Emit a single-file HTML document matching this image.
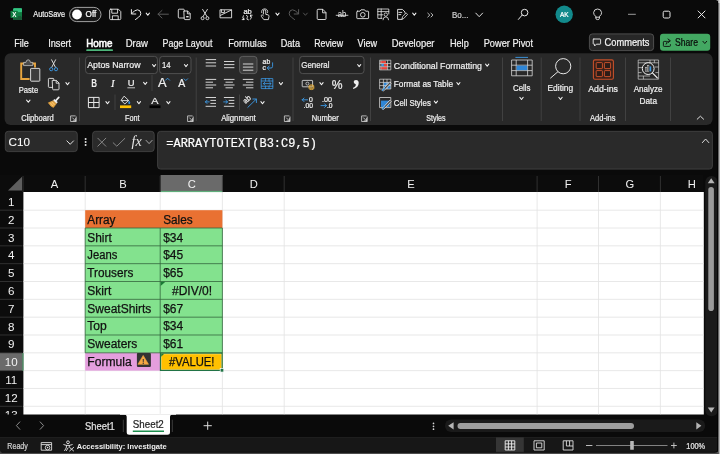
<!DOCTYPE html>
<html lang="en">
<head>
<meta charset="utf-8">
<title>Excel - ARRAYTOTEXT</title>
<style>
html,body{margin:0;padding:0;background:#0a0a0a;overflow:hidden}
body{width:720px;height:454px}
svg{display:block;will-change:transform;font-family:"Liberation Sans",sans-serif}
</style>
</head>
<body>
<svg width="720" height="454" viewBox="0 0 720 454">
<rect x="0" y="0" width="720" height="454" fill="#0a0a0a" />
<rect x="13.2" y="8.3" width="8.8" height="11.7" fill="#21a366" rx="1" />
<rect x="13.2" y="8.3" width="8.8" height="3.9" fill="#33c481" rx="1" />
<rect x="13.2" y="16.1" width="8.8" height="3.9" fill="#185c37" rx="1" />
<rect x="17.6" y="12.2" width="4.4" height="3.9" fill="#107c41" />
<rect x="10.5" y="10.7" width="7.3" height="7.3" fill="#107c41" rx="0.8" />
<text x="14.4" y="16.7" font-size="6.6" fill="#ffffff" textLength="4.2" lengthAdjust="spacingAndGlyphs" font-weight="bold" text-anchor="middle" >X</text>
<text x="33.3" y="17.3" font-size="8.3" fill="#f0f0f0" textLength="31.7" lengthAdjust="spacingAndGlyphs" stroke="#f0f0f0" stroke-width="0.22" >AutoSave</text>
<rect x="69.6" y="7.4" width="31.4" height="14.2" fill="#161616" rx="7.1" stroke="#b0b0b0" stroke-width="0.9" />
<circle cx="77" cy="14.5" r="4.9" fill="#ffffff"/>
<text x="85.6" y="17.3" font-size="8.3" fill="#ffffff" textLength="10.7" lengthAdjust="spacingAndGlyphs" stroke="#ffffff" stroke-width="0.22" >Off</text>
<path d="M110.7 9.2 H118.4 L120.8 11.6 V18.6 Q120.8 19.6 119.8 19.6 H110.7 Q109.7 19.6 109.7 18.6 V10.2 Q109.7 9.2 110.7 9.2 Z M111.8 9.4 V13.2 H117.6 V9.4 M112.4 19.4 V15.8 H118.2 V19.4" stroke="#e8e8e8" stroke-width="0.9" fill="none" stroke-linecap="round" stroke-linejoin="round"/>
<path d="M131.4 9.6 V14 H135.8 M131.6 13.8 Q134.4 9.8 137.6 9.8 Q140.8 10.2 140.8 13.4 Q140.8 15.6 138.6 17.2 L135.4 19.6" stroke="#e8e8e8" stroke-width="1.0" fill="none" stroke-linecap="round" stroke-linejoin="round"/>
<path d="M146.20000000000002 13.149999999999999 L147.8 15.25 L149.4 13.149999999999999" stroke="#f4f4f4" stroke-width="1.05" fill="none" stroke-linecap="round" stroke-linejoin="round"/>
<path d="M168.4 14.2 H158 M162 10.4 L158 14.2 L162 18" stroke="#5a5a5a" stroke-width="1.0" fill="none" stroke-linecap="round" stroke-linejoin="round"/>
<path d="M184.2 18 H179.2 Q178.3 18 178.3 17.1 V10.1 Q178.3 9.2 179.2 9.2 H183.4 Q184.3 9.2 184.3 10.1 V11" stroke="#e8e8e8" stroke-width="0.9" fill="none" stroke-linecap="round" stroke-linejoin="round"/>
<path d="M184.2 11 H187.6 L190.2 13.6 V18.8 Q190.2 19.6 189.4 19.6 H185 Q184.2 19.6 184.2 18.8 Z M187.4 11.2 V13.8 H190" stroke="#e8e8e8" stroke-width="0.9" fill="none" stroke-linecap="round" stroke-linejoin="round"/>
<rect x="186.2" y="16" width="2.4" height="1.4" fill="#e8e8e8" />
<path d="M202.6 9.4 L207 16.6 M207.4 9.4 L203 16.6" stroke="#e8e8e8" stroke-width="0.9" fill="none" stroke-linecap="round" stroke-linejoin="round"/>
<circle cx="202.6" cy="18.2" r="1.5" fill="none" stroke="#e8e8e8" stroke-width="0.9"/>
<circle cx="207.4" cy="18.2" r="1.5" fill="none" stroke="#e8e8e8" stroke-width="0.9"/>
<path d="M220.4 9.8 H231.6 V17.8 H220.4 Z M220.4 15.4 L231.4 10 M221.4 9.8 V12.6 H224.4 V10.6" stroke="#e8e8e8" stroke-width="0.9" fill="none" stroke-linecap="round" stroke-linejoin="round"/>
<text x="243.4" y="14.4" font-size="7.4" fill="#f2f2f2" textLength="8.4" lengthAdjust="spacingAndGlyphs" stroke="#f2f2f2" stroke-width="0.22" >ab</text>
<path d="M243.4 15.6 Q241.6 17.6 243.8 19.6 M243.8 19.6 V18 M243.8 19.6 H242.2 M250.6 15.2 Q252.8 17.2 250.4 19.4 M250.6 15.2 V16.8 M250.6 15.2 H252.2 M246.4 15.4 Q248.8 16 247.2 17.8 Q245.8 19.4 248.4 19.9" stroke="#f2f2f2" stroke-width="0.85" fill="none" stroke-linecap="round" stroke-linejoin="round"/>
<path d="M263.4 14 V11 Q263.4 9.8 264.6 9.8 Q265.8 9.8 265.8 11 V14.4 L268 14.8 Q269.2 15.2 269 16.4 L268.4 19.6 H263.8 L261.4 16.4 Q260.8 15.4 261.8 15 Q262.6 14.8 263.4 15.8" stroke="#e8e8e8" stroke-width="0.9" fill="none" stroke-linecap="round" stroke-linejoin="round"/>
<path d="M261.6 12.6 Q260.8 9.4 264.6 8.8 Q268.4 9.2 267.6 12.6" stroke="#e8e8e8" stroke-width="0.8" fill="none" stroke-linecap="round" stroke-linejoin="round"/>
<path d="M275.9 13.149999999999999 L277.5 15.25 L279.1 13.149999999999999" stroke="#f4f4f4" stroke-width="1.05" fill="none" stroke-linecap="round" stroke-linejoin="round"/>
<path d="M298.6 9.6 V14 H294.2 M298.4 13.8 Q295.6 9.8 292.4 9.8 Q289.2 10.2 289.2 13.4 Q289.2 15.6 291.4 17.2 L294.6 19.6" stroke="#5a5a5a" stroke-width="1.0" fill="none" stroke-linecap="round" stroke-linejoin="round"/>
<path d="M303.5 13.1 L305.4 15.299999999999999 L307.29999999999995 13.1" stroke="#5a5a5a" stroke-width="0.9" fill="none" stroke-linecap="round" stroke-linejoin="round"/>
<path d="M317.2 10 Q317.2 9.3 317.9 9.3 H322.8 L326 12.6 V18.8 Q326 19.5 325.3 19.5 H317.9 Q317.2 19.5 317.2 18.8 Z M322.6 9.5 V12.8 H325.8" stroke="#e8e8e8" stroke-width="0.9" fill="none" stroke-linecap="round" stroke-linejoin="round"/>
<text x="337.8" y="17.4" font-size="8.4" fill="#f2f2f2" textLength="8.6" lengthAdjust="spacingAndGlyphs" stroke="none">ab</text>
<line x1="335.8" y1="15.3" x2="348.3" y2="15.3" stroke="#f2f2f2" stroke-width="0.8" />
<path d="M357.4 11.2 H360 L361 9.8 H364.6 L365.6 11.2 H368 Q368.6 11.2 368.6 11.8 V18 Q368.6 18.6 368 18.6 H357.4 Q356.8 18.6 356.8 18 V11.8 Q356.8 11.2 357.4 11.2 Z" stroke="#e8e8e8" stroke-width="0.9" fill="none" stroke-linecap="round" stroke-linejoin="round"/>
<circle cx="362.8" cy="14.8" r="2.3" fill="none" stroke="#e8e8e8" stroke-width="0.9"/>
<path d="M377.8 9 H388.8 V14 M377.8 9 V18.4 H382 M377.8 11.6 H388.8 M381.2 9 V18.4 M377.8 14.8 H382.6" stroke="#e8e8e8" stroke-width="0.8" fill="none" stroke-linecap="round" stroke-linejoin="round"/>
<circle cx="385.8" cy="14.6" r="1.7" fill="none" stroke="#e8e8e8" stroke-width="0.8"/>
<path d="M383 19.8 Q383 16.9 385.8 16.9 Q388.6 16.9 388.6 19.8" stroke="#e8e8e8" stroke-width="0.8" fill="none" stroke-linecap="round" stroke-linejoin="round"/>
<path d="M402 19.4 H397.6 V9.4 H402.4 L405 12 V13 M398.8 12.4 H401.8 M398.8 14.6 H400.8" stroke="#e8e8e8" stroke-width="0.9" fill="none" stroke-linecap="round" stroke-linejoin="round"/>
<path d="M402 18.8 L402.6 16.6 L406.2 13 L407.6 14.4 L404 18.2 Z" stroke="#e8e8e8" stroke-width="0.8" fill="none" stroke-linecap="round" stroke-linejoin="round"/>
<path d="M412.7 13.149999999999999 L414.3 15.25 L415.90000000000003 13.149999999999999" stroke="#f4f4f4" stroke-width="1.05" fill="none" stroke-linecap="round" stroke-linejoin="round"/>
<path d="M427.8 13.2 L429.8 15.1 L427.8 17 M431 13.2 L433 15.1 L431 17" stroke="#cfcfcf" stroke-width="0.9" fill="none" stroke-linecap="round" stroke-linejoin="round"/>
<text x="452" y="17.5" font-size="8.6" fill="#cfcfcf" textLength="16.4" lengthAdjust="spacingAndGlyphs" stroke="#cfcfcf" stroke-width="0.22" >Bo...</text>
<path d="M475.8 13.1 L479.2 16.7 L482.59999999999997 13.1" stroke="#e0e0e0" stroke-width="1.0" fill="none" stroke-linecap="round" stroke-linejoin="round"/>
<circle cx="524.6" cy="12.6" r="3.3" fill="none" stroke="#e8e8e8" stroke-width="1"/>
<path d="M522.2 15 L518.4 19.4" stroke="#e8e8e8" stroke-width="1.0" fill="none" stroke-linecap="round" stroke-linejoin="round"/>
<circle cx="564.2" cy="14.3" r="8.7" fill="#128a8c"/>
<text x="564.3" y="16.9" font-size="6.9" fill="#ffffff" textLength="8.6" lengthAdjust="spacingAndGlyphs" text-anchor="middle" stroke="#ffffff" stroke-width="0.22" >AK</text>
<path d="M595.8 16.6 Q593.4 14.4 593.6 12.6 Q594 9 597.6 9 Q601.2 9 601.6 12.6 Q601.8 14.4 599.4 16.6 V18.4 Q599.4 19.6 597.6 19.6 Q595.8 19.6 595.8 18.4 Z M595.8 17.2 H599.4" stroke="#e8e8e8" stroke-width="0.9" fill="none" stroke-linecap="round" stroke-linejoin="round"/>
<line x1="628" y1="14.3" x2="635.8" y2="14.3" stroke="#9a9a9a" stroke-width="1.0" />
<rect x="663.2" y="11.2" width="6.8" height="6.8" fill="none" rx="1.4" stroke="#e8e8e8" stroke-width="1.0" />
<path d="M698.1 11 L705 17.9 M705 11 L698.1 17.9" stroke="#e8e8e8" stroke-width="1.0" fill="none" stroke-linecap="round"/>
<text x="14.2" y="47" font-size="10.4" fill="#f0f0f0" textLength="14.5" lengthAdjust="spacingAndGlyphs" stroke="#f0f0f0" stroke-width="0.22" >File</text>
<text x="48.2" y="47" font-size="10.4" fill="#f0f0f0" textLength="23.0" lengthAdjust="spacingAndGlyphs" stroke="#f0f0f0" stroke-width="0.22" >Insert</text>
<text x="125.7" y="47" font-size="10.4" fill="#f0f0f0" textLength="22.3" lengthAdjust="spacingAndGlyphs" stroke="#f0f0f0" stroke-width="0.22" >Draw</text>
<text x="162.5" y="47" font-size="10.4" fill="#f0f0f0" textLength="50.0" lengthAdjust="spacingAndGlyphs" stroke="#f0f0f0" stroke-width="0.22" >Page Layout</text>
<text x="228.2" y="47" font-size="10.4" fill="#f0f0f0" textLength="38.5" lengthAdjust="spacingAndGlyphs" stroke="#f0f0f0" stroke-width="0.22" >Formulas</text>
<text x="280.7" y="47" font-size="10.4" fill="#f0f0f0" textLength="19.3" lengthAdjust="spacingAndGlyphs" stroke="#f0f0f0" stroke-width="0.22" >Data</text>
<text x="314.2" y="47" font-size="10.4" fill="#f0f0f0" textLength="28.8" lengthAdjust="spacingAndGlyphs" stroke="#f0f0f0" stroke-width="0.22" >Review</text>
<text x="357.5" y="47" font-size="10.4" fill="#f0f0f0" textLength="19.5" lengthAdjust="spacingAndGlyphs" stroke="#f0f0f0" stroke-width="0.22" >View</text>
<text x="391.7" y="47" font-size="10.4" fill="#f0f0f0" textLength="42.8" lengthAdjust="spacingAndGlyphs" stroke="#f0f0f0" stroke-width="0.22" >Developer</text>
<text x="450" y="47" font-size="10.4" fill="#f0f0f0" textLength="18.7" lengthAdjust="spacingAndGlyphs" stroke="#f0f0f0" stroke-width="0.22" >Help</text>
<text x="483.7" y="47" font-size="10.4" fill="#f0f0f0" textLength="49.3" lengthAdjust="spacingAndGlyphs" stroke="#f0f0f0" stroke-width="0.22" >Power Pivot</text>
<text x="86.2" y="47" font-size="10.4" fill="#ffffff" textLength="26.3" lengthAdjust="spacingAndGlyphs" stroke="#ffffff" stroke-width="0.55">Home</text>
<rect x="86.2" y="49.2" width="26.8" height="1.9" fill="#4db57a" rx="0.9" />
<rect x="589.4" y="33.9" width="64.2" height="16.7" fill="#272727" rx="3" stroke="#5c5c5c" stroke-width="0.8" />
<path d="M593.8 39 H600 Q600.6 39 600.6 39.6 V43.6 Q600.6 44.2 600 44.2 H596.4 L594.6 46 V44.2 H593.8 Q593.2 44.2 593.2 43.6 V39.6 Q593.2 39 593.8 39 Z" stroke="#f0f0f0" stroke-width="0.9" fill="none" stroke-linecap="round" stroke-linejoin="round"/>
<text x="604.5" y="46.2" font-size="10.2" fill="#f5f5f5" textLength="45" lengthAdjust="spacingAndGlyphs" stroke="#f5f5f5" stroke-width="0.22" >Comments</text>
<rect x="660" y="33.7" width="50.2" height="17.1" fill="#43a862" rx="3" />
<path d="M666.4 41.4 H664.2 Q663.4 41.4 663.4 42.2 V45.6 Q663.4 46.4 664.2 46.4 H669.6 Q670.4 46.4 670.4 45.6 V44.6 M666 44.2 Q666.4 41 669.4 40.8 M668 39 L670.4 40.8 L668 42.8" stroke="#0c0c0c" stroke-width="0.9" fill="none" stroke-linecap="round" stroke-linejoin="round"/>
<text x="675" y="46.2" font-size="10.2" fill="#0a0a0a" textLength="23" lengthAdjust="spacingAndGlyphs" stroke="#0a0a0a" stroke-width="0.22" >Share</text>
<path d="M702.9 41.3 L704.8 43.5 L706.6999999999999 41.3" stroke="#0a0a0a" stroke-width="0.9" fill="none" stroke-linecap="round" stroke-linejoin="round"/>
<rect x="4.6" y="53.2" width="708" height="71.8" fill="#292929" rx="6" />
<path d="M25 63.5 H21.2 V79 H29.6" stroke="#e9a63f" stroke-width="1.9" fill="none" stroke-linejoin="miter"/>
<path d="M31.6 63.5 H35 V67.6" stroke="#e9a63f" stroke-width="1.9" fill="none" stroke-linejoin="miter"/>
<path d="M23.6 65.2 V62.4 H26 Q26.2 59.8 28.2 59.8 Q30.2 59.8 30.4 62.4 H32.8 V65.2 Z" stroke="#c4c4c4" stroke-width="0.8" fill="#4a4a4a" stroke-linecap="round" stroke-linejoin="round"/>
<rect x="30.6" y="68.4" width="9.2" height="12.8" fill="#3c3c3c" rx="0.6" stroke="#e8e8e8" stroke-width="0.9" />
<text x="18.7" y="93" font-size="9.700000000000001" fill="#f0f0f0" textLength="19.5" lengthAdjust="spacingAndGlyphs" stroke="#f0f0f0" stroke-width="0.22" >Paste</text>
<path d="M26.6 100.10000000000001 L28.3 102.3 L30.0 100.10000000000001" stroke="#f4f4f4" stroke-width="1.05" fill="none" stroke-linecap="round" stroke-linejoin="round"/>
<path d="M51.6 59.8 L55.4 67.2 M55.6 59.8 L51.8 67.2" stroke="#e8e8e8" stroke-width="0.9" fill="none" stroke-linecap="round" stroke-linejoin="round"/>
<circle cx="51.2" cy="69.2" r="1.6" fill="none" stroke="#3c9be8" stroke-width="0.9"/>
<circle cx="56" cy="69.2" r="1.6" fill="none" stroke="#3c9be8" stroke-width="0.9"/>
<path d="M52.6 87.4 H49.2 Q48.4 87.4 48.4 86.6 V79.2 Q48.4 78.4 49.2 78.4 H53 Q53.8 78.4 53.8 79.2 V80.4" stroke="#e8e8e8" stroke-width="0.9" fill="none" stroke-linecap="round" stroke-linejoin="round"/>
<path d="M52.6 80.4 H56.4 L59 83 V89 Q59 89.8 58.2 89.8 H53.4 Q52.6 89.8 52.6 89 Z M56.2 80.6 V83.2 H58.8" stroke="#e8e8e8" stroke-width="0.9" fill="none" stroke-linecap="round" stroke-linejoin="round"/>
<path d="M65.9 82.65 L67.5 84.75 L69.1 82.65" stroke="#f4f4f4" stroke-width="1.05" fill="none" stroke-linecap="round" stroke-linejoin="round"/>
<path d="M55.8 100.6 L58.8 97.4" stroke="#f0f0f0" stroke-width="1.7" fill="none" stroke-linecap="round"/>
<path d="M54.6 99.6 L57.4 102.2 L56 103.4 L53.4 100.8 Z" stroke="#f0f0f0" stroke-width="0.7" fill="#f0f0f0" stroke-linecap="round" stroke-linejoin="round"/>
<path d="M53 101 L48.4 102.8 Q50.6 106.6 53.4 107.4 L56.2 103.8 Z" stroke="#e9a63f" stroke-width="0.7" fill="#e9a63f" stroke-linecap="round" stroke-linejoin="round"/>
<path d="M50.4 103 L52.6 105.6 M52 102 L54.4 104.8" stroke="#fbe3b4" stroke-width="0.5" fill="none" stroke-linecap="round" stroke-linejoin="round"/>
<text x="21.2" y="121.2" font-size="8.6" fill="#f0f0f0" textLength="32.5" lengthAdjust="spacingAndGlyphs" stroke="#f0f0f0" stroke-width="0.22" >Clipboard</text>
<path d="M75.19999999999999 115.9 H70.6 V121.5 H76.19999999999999 V116.9 " stroke="#d8d8d8" stroke-width="0.8" fill="none" stroke-linecap="round" stroke-linejoin="round"/>
<path d="M72.6 117.9 L75.6 120.9 M75.6 118.5 V120.9 H73.19999999999999" stroke="#d8d8d8" stroke-width="0.8" fill="none" stroke-linecap="round" stroke-linejoin="round"/>
<line x1="79.5" y1="57.5" x2="79.5" y2="121" stroke="#484848" stroke-width="0.8" />
<rect x="85.6" y="56.4" width="71.8" height="17.2" fill="#232323" rx="3" stroke="#5a5a5a" stroke-width="0.8" />
<text x="87.2" y="68.2" font-size="9.700000000000001" fill="#f0f0f0" textLength="53.3" lengthAdjust="spacingAndGlyphs" stroke="#f0f0f0" stroke-width="0.22" >Aptos Narrow</text>
<path d="M152.5 64.55 L154.1 66.64999999999999 L155.7 64.55" stroke="#f4f4f4" stroke-width="1.05" fill="none" stroke-linecap="round" stroke-linejoin="round"/>
<rect x="159.6" y="56.4" width="31.4" height="17.2" fill="#232323" rx="3" stroke="#5a5a5a" stroke-width="0.8" />
<text x="162" y="68.2" font-size="9.700000000000001" fill="#f0f0f0" textLength="8.6" lengthAdjust="spacingAndGlyphs" stroke="#f0f0f0" stroke-width="0.22" >14</text>
<path d="M184.4 64.55 L186 66.64999999999999 L187.6 64.55" stroke="#f4f4f4" stroke-width="1.05" fill="none" stroke-linecap="round" stroke-linejoin="round"/>
<text x="91.2" y="86.7" font-size="10" fill="#f0f0f0" textLength="5.8" lengthAdjust="spacingAndGlyphs" font-weight="bold" >B</text>
<text x="111" y="86.7" font-size="10" fill="#f0f0f0" textLength="3.6" lengthAdjust="spacingAndGlyphs" font-style="italic" font-family='"Liberation Serif", serif' stroke="#f0f0f0" stroke-width="0.22" >I</text>
<text x="127.8" y="86.4" font-size="9.6" fill="#f0f0f0" textLength="6.8" lengthAdjust="spacingAndGlyphs" stroke="#f0f0f0" stroke-width="0.22" >U</text>
<line x1="127.4" y1="87.8" x2="135" y2="87.8" stroke="#e8e8e8" stroke-width="0.8" />
<path d="M143.6 82.35000000000001 L145.2 84.45 L146.79999999999998 82.35000000000001" stroke="#f4f4f4" stroke-width="1.05" fill="none" stroke-linecap="round" stroke-linejoin="round"/>
<line x1="152" y1="75" x2="152" y2="91" stroke="#484848" stroke-width="0.8" />
<text x="158" y="87.4" font-size="12.6" fill="#f0f0f0" textLength="8.6" lengthAdjust="spacingAndGlyphs" stroke="#f0f0f0" stroke-width="0.22" >A</text>
<path d="M165.6 80.2 L167.6 78.2 L169.6 80.2" stroke="#3c9be8" stroke-width="0.9" fill="none" stroke-linecap="round" stroke-linejoin="round"/>
<text x="178.2" y="87.4" font-size="10.4" fill="#f0f0f0" textLength="7" lengthAdjust="spacingAndGlyphs" stroke="#f0f0f0" stroke-width="0.22" >A</text>
<path d="M184 78.8 L185.8 80.6 L187.6 78.8" stroke="#3c9be8" stroke-width="0.9" fill="none" stroke-linecap="round" stroke-linejoin="round"/>
<path d="M88.4 97.4 H99.1 V107.6 H88.4 Z M93.75 97.4 V107.6 M88.4 102.5 H99.1" stroke="#e8e8e8" stroke-width="1.0" fill="none" />
<path d="M105.9 101.65 L107.5 103.75 L109.1 101.65" stroke="#f4f4f4" stroke-width="1.05" fill="none" stroke-linecap="round" stroke-linejoin="round"/>
<line x1="115" y1="94.5" x2="115" y2="110" stroke="#484848" stroke-width="0.8" />
<path d="M124.4 96.4 L128.6 100.4 L124.8 104 L121.4 100.6 Z M121.6 100.6 H128.4" stroke="#e8e8e8" stroke-width="0.9" fill="none" stroke-linecap="round" stroke-linejoin="round"/>
<path d="M129.2 101.2 Q130.8 103.4 129.2 104 Q127.8 103.4 129.2 101.2 Z" stroke="#3c9be8" stroke-width="0.6" fill="#3c9be8" />
<rect x="120" y="105.4" width="11.2" height="2.7" fill="#ffc000" />
<path d="M137.3 101.65 L138.9 103.75 L140.5 101.65" stroke="#f4f4f4" stroke-width="1.05" fill="none" stroke-linecap="round" stroke-linejoin="round"/>
<text x="151.3" y="104.4" font-size="9.9" fill="#f0f0f0" textLength="7.2" lengthAdjust="spacingAndGlyphs" stroke="#f0f0f0" stroke-width="0.22" >A</text>
<rect x="149.5" y="105.4" width="11" height="2.7" fill="#000000" />
<path d="M166.8 101.65 L168.4 103.75 L170.0 101.65" stroke="#f4f4f4" stroke-width="1.05" fill="none" stroke-linecap="round" stroke-linejoin="round"/>
<text x="125" y="121.2" font-size="8.6" fill="#f0f0f0" textLength="14.5" lengthAdjust="spacingAndGlyphs" stroke="#f0f0f0" stroke-width="0.22" >Font</text>
<path d="M192.2 115.9 H187.6 V121.5 H193.2 V116.9 " stroke="#d8d8d8" stroke-width="0.8" fill="none" stroke-linecap="round" stroke-linejoin="round"/>
<path d="M189.6 117.9 L192.6 120.9 M192.6 118.5 V120.9 H190.2" stroke="#d8d8d8" stroke-width="0.8" fill="none" stroke-linecap="round" stroke-linejoin="round"/>
<line x1="196.2" y1="57.5" x2="196.2" y2="121" stroke="#484848" stroke-width="0.8" />
<line x1="205.7" y1="59.6" x2="216.1" y2="59.6" stroke="#e8e8e8" stroke-width="0.9" />
<line x1="205.7" y1="62.8" x2="216.1" y2="62.8" stroke="#e8e8e8" stroke-width="0.9" />
<line x1="205.7" y1="66" x2="216.1" y2="66" stroke="#e8e8e8" stroke-width="0.9" />
<line x1="224.0" y1="61.5" x2="234.4" y2="61.5" stroke="#e8e8e8" stroke-width="0.9" />
<line x1="224.0" y1="64.6" x2="234.4" y2="64.6" stroke="#e8e8e8" stroke-width="0.9" />
<line x1="224.0" y1="67.7" x2="234.4" y2="67.7" stroke="#e8e8e8" stroke-width="0.9" />
<rect x="239.6" y="56.4" width="17.4" height="17.2" fill="#3a3a3a" rx="3" stroke="#6a6a6a" stroke-width="0.8" />
<line x1="242.9" y1="64" x2="253.3" y2="64" stroke="#e8e8e8" stroke-width="0.9" />
<line x1="242.9" y1="67.1" x2="253.3" y2="67.1" stroke="#e8e8e8" stroke-width="0.9" />
<line x1="242.9" y1="70.2" x2="253.3" y2="70.2" stroke="#e8e8e8" stroke-width="0.9" />
<text x="262.6" y="64.4" font-size="6.8" fill="#f0f0f0" textLength="7.6" lengthAdjust="spacingAndGlyphs" stroke="#f0f0f0" stroke-width="0.22" >ab</text>
<text x="262.6" y="70.2" font-size="6.8" fill="#f0f0f0" textLength="3.4" lengthAdjust="spacingAndGlyphs" stroke="#f0f0f0" stroke-width="0.22" >c</text>
<path d="M272.6 62.8 V66.4 Q272.6 68 271 68 H267.4 M269.2 66 L267.2 68 L269.2 70" stroke="#3c9be8" stroke-width="0.9" fill="none" stroke-linecap="round" stroke-linejoin="round"/>
<line x1="205.6" y1="79.4" x2="216.2" y2="79.4" stroke="#e8e8e8" stroke-width="0.9" />
<line x1="205.6" y1="82.2" x2="213.0" y2="82.2" stroke="#e8e8e8" stroke-width="0.9" />
<line x1="205.6" y1="85" x2="216.2" y2="85" stroke="#e8e8e8" stroke-width="0.9" />
<line x1="205.6" y1="87.8" x2="213.0" y2="87.8" stroke="#e8e8e8" stroke-width="0.9" />
<line x1="223.9" y1="79.4" x2="234.5" y2="79.4" stroke="#e8e8e8" stroke-width="0.9" />
<line x1="225.5" y1="82.2" x2="232.9" y2="82.2" stroke="#e8e8e8" stroke-width="0.9" />
<line x1="223.9" y1="85" x2="234.5" y2="85" stroke="#e8e8e8" stroke-width="0.9" />
<line x1="225.5" y1="87.8" x2="232.9" y2="87.8" stroke="#e8e8e8" stroke-width="0.9" />
<line x1="242.8" y1="79.4" x2="253.4" y2="79.4" stroke="#e8e8e8" stroke-width="0.9" />
<line x1="246.0" y1="82.2" x2="253.4" y2="82.2" stroke="#e8e8e8" stroke-width="0.9" />
<line x1="242.8" y1="85" x2="253.4" y2="85" stroke="#e8e8e8" stroke-width="0.9" />
<line x1="246.0" y1="87.8" x2="253.4" y2="87.8" stroke="#e8e8e8" stroke-width="0.9" />
<path d="M261.6 78.6 H272.8 V88.6 H261.6 Z M261.6 81 H272.8 M261.6 86.2 H272.8 M265.4 78.6 V81 M269 78.6 V81 M265.4 86.2 V88.6 M269 86.2 V88.6" stroke="#3c9be8" stroke-width="0.8" fill="none" stroke-linecap="round" stroke-linejoin="round"/>
<path d="M263.4 83.6 H271 M264.8 82.2 L263.4 83.6 L264.8 85 M269.6 82.2 L271 83.6 L269.6 85" stroke="#3c9be8" stroke-width="0.8" fill="none" stroke-linecap="round" stroke-linejoin="round"/>
<path d="M279.29999999999995 82.65 L280.9 84.75 L282.5 82.65" stroke="#f4f4f4" stroke-width="1.05" fill="none" stroke-linecap="round" stroke-linejoin="round"/>
<line x1="205.6" y1="97.5" x2="216.0" y2="97.5" stroke="#e8e8e8" stroke-width="0.9" />
<line x1="205.6" y1="106.3" x2="216.0" y2="106.3" stroke="#e8e8e8" stroke-width="0.9" />
<line x1="210.4" y1="100.4" x2="216.0" y2="100.4" stroke="#e8e8e8" stroke-width="0.9" />
<line x1="210.4" y1="103.4" x2="216.0" y2="103.4" stroke="#e8e8e8" stroke-width="0.9" />
<path d="M209.2 101.9 H205.4 M207 100.3 L205.4 101.9 L207 103.5" stroke="#3c9be8" stroke-width="0.9" fill="none" stroke-linecap="round" stroke-linejoin="round"/>
<line x1="223.9" y1="97.5" x2="234.3" y2="97.5" stroke="#e8e8e8" stroke-width="0.9" />
<line x1="223.9" y1="106.3" x2="234.3" y2="106.3" stroke="#e8e8e8" stroke-width="0.9" />
<line x1="228.7" y1="100.4" x2="234.29999999999998" y2="100.4" stroke="#e8e8e8" stroke-width="0.9" />
<line x1="228.7" y1="103.4" x2="234.29999999999998" y2="103.4" stroke="#e8e8e8" stroke-width="0.9" />
<path d="M223.7 101.9 H227.5 M225.9 100.3 L227.5 101.9 L225.9 103.5" stroke="#3c9be8" stroke-width="0.9" fill="none" stroke-linecap="round" stroke-linejoin="round"/>
<line x1="239.5" y1="94.5" x2="239.5" y2="110" stroke="#484848" stroke-width="0.8" />
<text x="0" y="0" font-size="7.6" fill="#f0f0f0" textLength="8" lengthAdjust="spacingAndGlyphs" stroke="#f0f0f0" stroke-width="0.22" transform="translate(245.6,104) rotate(-42)">ab</text>
<path d="M247.8 107.4 L256.2 99.2 M252.8 99 H256.4 V102.6" stroke="#3c9be8" stroke-width="0.9" fill="none" stroke-linecap="round" stroke-linejoin="round"/>
<path d="M260.9 101.65 L262.5 103.75 L264.1 101.65" stroke="#f4f4f4" stroke-width="1.05" fill="none" stroke-linecap="round" stroke-linejoin="round"/>
<text x="221.2" y="121.2" font-size="8.6" fill="#f0f0f0" textLength="34.5" lengthAdjust="spacingAndGlyphs" stroke="#f0f0f0" stroke-width="0.22" >Alignment</text>
<path d="M289.0 115.9 H284.4 V121.5 H290.0 V116.9 " stroke="#d8d8d8" stroke-width="0.8" fill="none" stroke-linecap="round" stroke-linejoin="round"/>
<path d="M286.4 117.9 L289.4 120.9 M289.4 118.5 V120.9 H287.0" stroke="#d8d8d8" stroke-width="0.8" fill="none" stroke-linecap="round" stroke-linejoin="round"/>
<line x1="293" y1="57.5" x2="293" y2="121" stroke="#484848" stroke-width="0.8" />
<rect x="299.6" y="56.4" width="64.4" height="17.2" fill="#232323" rx="3" stroke="#5a5a5a" stroke-width="0.8" />
<text x="301.3" y="68.2" font-size="9.700000000000001" fill="#f0f0f0" textLength="28.2" lengthAdjust="spacingAndGlyphs" stroke="#f0f0f0" stroke-width="0.22" >General</text>
<path d="M357.59999999999997 64.55 L359.2 66.64999999999999 L360.8 64.55" stroke="#f4f4f4" stroke-width="1.05" fill="none" stroke-linecap="round" stroke-linejoin="round"/>
<rect x="302.2" y="80.4" width="10.4" height="6.4" fill="none" rx="0.6" stroke="#e8e8e8" stroke-width="0.8" />
<circle cx="307.4" cy="83.6" r="1.5" fill="none" stroke="#e8e8e8" stroke-width="0.7"/>
<path d="M309 85.8 Q309 84.8 311.4 84.8 Q313.8 84.8 313.8 85.8 V88.6 Q313.8 89.6 311.4 89.6 Q309 89.6 309 88.6 Z M309 86 Q309 87 311.4 87 Q313.8 87 313.8 86 M309 87.4 Q309 88.4 311.4 88.4 Q313.8 88.4 313.8 87.4" stroke="#e9b23f" stroke-width="0.7" fill="#e9b23f" fill-opacity="0.55"/>
<path d="M319.9 82.65 L321.5 84.75 L323.1 82.65" stroke="#f4f4f4" stroke-width="1.05" fill="none" stroke-linecap="round" stroke-linejoin="round"/>
<text x="331.8" y="88.8" font-size="13.6" fill="#f0f0f0" textLength="10.8" lengthAdjust="spacingAndGlyphs" stroke="#f0f0f0" stroke-width="0.22" >%</text>
<text x="352.8" y="84.2" font-size="30" fill="#f0f0f0" textLength="7" lengthAdjust="spacingAndGlyphs" font-weight="bold" font-family='"Liberation Serif", serif' >,</text>
<path d="M307.6 99.8 H302.2 M304 98 L302.2 99.8 L304 101.6" stroke="#3c9be8" stroke-width="0.9" fill="none" stroke-linecap="round" stroke-linejoin="round"/>
<text x="309" y="102.4" font-size="6.9" fill="#f0f0f0" textLength="3.8" lengthAdjust="spacingAndGlyphs" stroke="#f0f0f0" stroke-width="0.22" >0</text>
<text x="303.6" y="108" font-size="6.9" fill="#f0f0f0" textLength="9.4" lengthAdjust="spacingAndGlyphs" stroke="#f0f0f0" stroke-width="0.22" >.00</text>
<text x="322" y="102.4" font-size="6.9" fill="#f0f0f0" textLength="10" lengthAdjust="spacingAndGlyphs" stroke="#f0f0f0" stroke-width="0.22" >.00</text>
<path d="M321 105.6 H326.4 M324.6 103.8 L326.4 105.6 L324.6 107.4" stroke="#3c9be8" stroke-width="0.9" fill="none" stroke-linecap="round" stroke-linejoin="round"/>
<text x="327" y="108" font-size="6.9" fill="#f0f0f0" textLength="5.6" lengthAdjust="spacingAndGlyphs" stroke="#f0f0f0" stroke-width="0.22" >.0</text>
<text x="311.7" y="121.2" font-size="8.6" fill="#f0f0f0" textLength="27" lengthAdjust="spacingAndGlyphs" stroke="#f0f0f0" stroke-width="0.22" >Number</text>
<path d="M366.20000000000005 115.9 H361.6 V121.5 H367.20000000000005 V116.9 " stroke="#d8d8d8" stroke-width="0.8" fill="none" stroke-linecap="round" stroke-linejoin="round"/>
<path d="M363.6 117.9 L366.6 120.9 M366.6 118.5 V120.9 H364.20000000000005" stroke="#d8d8d8" stroke-width="0.8" fill="none" stroke-linecap="round" stroke-linejoin="round"/>
<line x1="370.5" y1="57.5" x2="370.5" y2="121" stroke="#484848" stroke-width="0.8" />
<rect x="380.4" y="60.9" width="5.6" height="2.4" fill="#e8453c" />
<rect x="383.6" y="63.8" width="4.4" height="2.6" fill="#e8453c" />
<rect x="381.4" y="63.8" width="2.4" height="2.6" fill="#3c9be8" />
<rect x="380.4" y="67" width="6.8" height="2.5" fill="#e8453c" />
<path d="M379.6 60.2 H390.8 V69.9 H379.6 Z M379.6 63.5 H390.8 M379.6 66.7 H390.8 M387.6 60.2 V69.9" stroke="#d8d8d8" stroke-width="0.7" fill="none" />
<line x1="380.9" y1="60.2" x2="380.9" y2="69.9" stroke="#d8d8d8" stroke-width="0.5" />
<text x="393.8" y="68.7" font-size="9.700000000000001" fill="#f0f0f0" textLength="88.2" lengthAdjust="spacingAndGlyphs" stroke="#f0f0f0" stroke-width="0.22" >Conditional Formatting</text>
<path d="M485.59999999999997 64.15 L487.2 66.25 L488.8 64.15" stroke="#f4f4f4" stroke-width="1.05" fill="none" stroke-linecap="round" stroke-linejoin="round"/>
<rect x="383.6" y="82.4" width="7" height="6.4" fill="#2f86d6" />
<path d="M379.6 79.2 H390.8 V89 H379.6 Z M379.6 82.4 H390.8 M379.6 85.6 H390.8 M383.4 79.2 V89 M387 79.2 V89" stroke="#d8d8d8" stroke-width="0.7" fill="none" />
<path d="M382.2 90 L389.8 81.8 L391.2 83.2 L383.8 90.8 Z" stroke="#f0f0f0" stroke-width="0.7" fill="#4a4a4a" stroke-linecap="round" stroke-linejoin="round"/>
<path d="M382.4 90.4 L384.6 88.2" stroke="#3c9be8" stroke-width="1.2" fill="none" stroke-linecap="round" stroke-linejoin="round"/>
<text x="393.8" y="87" font-size="9.700000000000001" fill="#f0f0f0" textLength="59.4" lengthAdjust="spacingAndGlyphs" stroke="#f0f0f0" stroke-width="0.22" >Format as Table</text>
<path d="M456.79999999999995 82.55 L458.4 84.64999999999999 L460.0 82.55" stroke="#f4f4f4" stroke-width="1.05" fill="none" stroke-linecap="round" stroke-linejoin="round"/>
<rect x="381" y="100.6" width="8.6" height="6.4" fill="#2f86d6" />
<path d="M379.6 97.5 H390.8 V107.6 H379.6 Z" stroke="#d8d8d8" stroke-width="0.8" fill="none" />
<path d="M382.2 108.4 L389.8 100.2 L391.2 101.6 L383.8 109.2 Z" stroke="#f0f0f0" stroke-width="0.7" fill="#4a4a4a" stroke-linecap="round" stroke-linejoin="round"/>
<path d="M382.4 108.8 L384.6 106.6" stroke="#3c9be8" stroke-width="1.2" fill="none" stroke-linecap="round" stroke-linejoin="round"/>
<text x="393.8" y="105.5" font-size="9.700000000000001" fill="#f0f0f0" textLength="37" lengthAdjust="spacingAndGlyphs" stroke="#f0f0f0" stroke-width="0.22" >Cell Styles</text>
<path d="M434.29999999999995 101.15 L435.9 103.25 L437.5 101.15" stroke="#f4f4f4" stroke-width="1.05" fill="none" stroke-linecap="round" stroke-linejoin="round"/>
<text x="426.2" y="121.2" font-size="8.6" fill="#f0f0f0" textLength="19.3" lengthAdjust="spacingAndGlyphs" stroke="#f0f0f0" stroke-width="0.22" >Styles</text>
<line x1="502.5" y1="57.5" x2="502.5" y2="121" stroke="#484848" stroke-width="0.8" />
<line x1="515.4" y1="57.4" x2="528" y2="57.4" stroke="#3c9be8" stroke-width="0.9" />
<path d="M511.6 60 H532.2 V75.8 H511.6 Z M511.6 65.2 H532.2 M511.6 70.6 H532.2 M516.2 60 V75.8 M527.6 60 V75.8" stroke="#d8d8d8" stroke-width="0.8" fill="none" />
<rect x="516.6" y="65.6" width="10.6" height="4.6" fill="#2f86d6" />
<text x="513" y="90.5" font-size="9.700000000000001" fill="#f0f0f0" textLength="17.5" lengthAdjust="spacingAndGlyphs" stroke="#f0f0f0" stroke-width="0.22" >Cells</text>
<path d="M519.8 97.30000000000001 L521.5 99.5 L523.2 97.30000000000001" stroke="#f4f4f4" stroke-width="1.05" fill="none" stroke-linecap="round" stroke-linejoin="round"/>
<line x1="541.2" y1="57.5" x2="541.2" y2="121" stroke="#484848" stroke-width="0.8" />
<circle cx="563.2" cy="66.2" r="7.6" fill="none" stroke="#e8e8e8" stroke-width="1"/>
<path d="M557.8 71.8 L550.6 78" stroke="#e8e8e8" stroke-width="1.0" fill="none" stroke-linecap="round" stroke-linejoin="round"/>
<text x="547.5" y="90.5" font-size="9.700000000000001" fill="#f0f0f0" textLength="25.7" lengthAdjust="spacingAndGlyphs" stroke="#f0f0f0" stroke-width="0.22" >Editing</text>
<path d="M558.8 97.30000000000001 L560.5 99.5 L562.2 97.30000000000001" stroke="#f4f4f4" stroke-width="1.05" fill="none" stroke-linecap="round" stroke-linejoin="round"/>
<line x1="580" y1="57.5" x2="580" y2="121" stroke="#484848" stroke-width="0.8" />
<rect x="593.4" y="59.9" width="20" height="19.4" fill="#38211a" rx="1.6" stroke="#c5502a" stroke-width="1.1" />
<rect x="596.2" y="62.6" width="6.2" height="6" fill="#2d1c17" rx="0.6" stroke="#c5502a" stroke-width="1.0" />
<rect x="604.4" y="62.6" width="6.2" height="6" fill="#2d1c17" rx="0.6" stroke="#c5502a" stroke-width="1.0" />
<rect x="596.2" y="70.6" width="6.2" height="6" fill="#2d1c17" rx="0.6" stroke="#c5502a" stroke-width="1.0" />
<rect x="604.4" y="70.6" width="6.2" height="6" fill="#2d1c17" rx="0.6" stroke="#c5502a" stroke-width="1.0" />
<text x="588.2" y="92.1" font-size="9.700000000000001" fill="#f0f0f0" textLength="29.8" lengthAdjust="spacingAndGlyphs" stroke="#f0f0f0" stroke-width="0.22" >Add-ins</text>
<text x="590" y="121.2" font-size="8.6" fill="#f0f0f0" textLength="25.5" lengthAdjust="spacingAndGlyphs" stroke="#f0f0f0" stroke-width="0.22" >Add-ins</text>
<line x1="625.5" y1="57.5" x2="625.5" y2="121" stroke="#484848" stroke-width="0.8" />
<path d="M638.2 60 H658.6 V79.2 H638.2 Z M638.2 62.8 H658.6 M638.2 67.6 H642 M638.2 72.6 H641.6 M638.2 76 H650 M643.4 76 V79.2 M650 60 V62.8 M654.4 60 V62.8 M654.8 67 H658.6 M655.4 72.6 H658.6" stroke="#d0d0d0" stroke-width="0.7" fill="none" />
<circle cx="648.2" cy="68.6" r="5.9" fill="#292929" stroke="#f0f0f0" stroke-width="1"/>
<path d="M652.4 72.8 L657.4 78" stroke="#f0f0f0" stroke-width="1.1" fill="none" stroke-linecap="round" stroke-linejoin="round"/>
<rect x="645.4" y="67.4" width="1.5" height="4" fill="none" stroke="#d8d8d8" stroke-width="0.5" />
<rect x="647.4" y="65.6" width="1.5" height="5.8" fill="none" stroke="#d8d8d8" stroke-width="0.5" />
<rect x="649.6" y="66.4" width="1.6" height="5" fill="#3c9be8" />
<text x="633.7" y="92.1" font-size="9.700000000000001" fill="#f0f0f0" textLength="28.8" lengthAdjust="spacingAndGlyphs" stroke="#f0f0f0" stroke-width="0.22" >Analyze</text>
<text x="639.5" y="103.9" font-size="9.700000000000001" fill="#f0f0f0" textLength="17.5" lengthAdjust="spacingAndGlyphs" stroke="#f0f0f0" stroke-width="0.22" >Data</text>
<line x1="670.5" y1="57.5" x2="670.5" y2="121" stroke="#484848" stroke-width="0.8" />
<path d="M697.2 119.2 L700.4 116.2 L703.6 119.2" stroke="#e0e0e0" stroke-width="1.0" fill="none" stroke-linecap="round" stroke-linejoin="round"/>
<rect x="5.3" y="131.3" width="72" height="20.3" fill="#2a2a2a" rx="3" stroke="#474747" stroke-width="0.8" />
<text x="8.6" y="146.2" font-size="11.4" fill="#ffffff" textLength="21.4" lengthAdjust="spacingAndGlyphs" stroke="#fff" stroke-width="0.1">C10</text>
<path d="M66.9 140.9 L70.2 144.29999999999998 L73.5 140.9" stroke="#e0e0e0" stroke-width="1.0" fill="none" stroke-linecap="round" stroke-linejoin="round"/>
<circle cx="85.6" cy="139.0" r="1.0" fill="#e4e4e4"/>
<circle cx="85.6" cy="142.0" r="1.0" fill="#e4e4e4"/>
<circle cx="85.6" cy="145.0" r="1.0" fill="#e4e4e4"/>
<rect x="92.6" y="131.3" width="61.6" height="20.3" fill="#2a2a2a" rx="3" stroke="#474747" stroke-width="0.8" />
<path d="M97.8 138.2 L105.8 146.2 M105.8 138.2 L97.8 146.2" stroke="#8e8e8e" stroke-width="0.9" fill="none" stroke-linecap="round"/>
<path d="M113.2 142.8 L116.8 146.2 L124.8 138.4" stroke="#8e8e8e" stroke-width="0.9" fill="none" stroke-linecap="round" stroke-linejoin="round"/>
<text x="131.6" y="146" font-size="14" fill="#e6e6e6" textLength="10.2" lengthAdjust="spacingAndGlyphs" font-style="italic" font-family='"Liberation Serif", serif' stroke="none">fx</text>
<path d="M146.1 140.4 L149.1 143.6 L152.1 140.4" stroke="#b4b4b4" stroke-width="0.9" fill="none" stroke-linecap="round" stroke-linejoin="round"/>
<rect x="157.6" y="131.3" width="554.8" height="37.8" fill="#2a2a2a" rx="3" stroke="#474747" stroke-width="0.8" />
<text x="166.3" y="146.7" font-size="13" fill="#ffffff" textLength="150.6" lengthAdjust="spacingAndGlyphs" font-family='"Liberation Mono", monospace' stroke="#ffffff" stroke-width="0.22" >=ARRAYTOTEXT(B3:C9,5)</text>
<path d="M702.4 142.6 L705.6 139 L708.8 142.6" stroke="#dcdcdc" stroke-width="1.0" fill="none" stroke-linecap="round" stroke-linejoin="round"/>
<rect x="0" y="175" width="703.8" height="239.5" fill="#0c0c0c" />
<rect x="23.4" y="192" width="680.4" height="222.5" fill="#ffffff" />
<clipPath id="gc"><rect x="0" y="175" width="703.8" height="239.5"/></clipPath>
<g clip-path="url(#gc)">
<line x1="23.4" y1="210.18" x2="703.8" y2="210.18" stroke="#e2e2e2" stroke-width="0.8" />
<line x1="23.4" y1="228.01" x2="703.8" y2="228.01" stroke="#e2e2e2" stroke-width="0.8" />
<line x1="23.4" y1="245.84" x2="703.8" y2="245.84" stroke="#e2e2e2" stroke-width="0.8" />
<line x1="23.4" y1="263.67" x2="703.8" y2="263.67" stroke="#e2e2e2" stroke-width="0.8" />
<line x1="23.4" y1="281.5" x2="703.8" y2="281.5" stroke="#e2e2e2" stroke-width="0.8" />
<line x1="23.4" y1="299.33" x2="703.8" y2="299.33" stroke="#e2e2e2" stroke-width="0.8" />
<line x1="23.4" y1="317.16" x2="703.8" y2="317.16" stroke="#e2e2e2" stroke-width="0.8" />
<line x1="23.4" y1="334.99" x2="703.8" y2="334.99" stroke="#e2e2e2" stroke-width="0.8" />
<line x1="23.4" y1="352.82" x2="703.8" y2="352.82" stroke="#e2e2e2" stroke-width="0.8" />
<line x1="23.4" y1="370.65" x2="703.8" y2="370.65" stroke="#e2e2e2" stroke-width="0.8" />
<line x1="23.4" y1="388.48" x2="703.8" y2="388.48" stroke="#e2e2e2" stroke-width="0.8" />
<line x1="23.4" y1="406.31" x2="703.8" y2="406.31" stroke="#e2e2e2" stroke-width="0.8" />
<line x1="23.4" y1="424.14" x2="703.8" y2="424.14" stroke="#e2e2e2" stroke-width="0.8" />
<line x1="85.19999999999999" y1="192" x2="85.19999999999999" y2="414.5" stroke="#e2e2e2" stroke-width="0.8" />
<line x1="160.2" y1="192" x2="160.2" y2="414.5" stroke="#e2e2e2" stroke-width="0.8" />
<line x1="222.4" y1="192" x2="222.4" y2="414.5" stroke="#e2e2e2" stroke-width="0.8" />
<line x1="284.20000000000005" y1="192" x2="284.20000000000005" y2="414.5" stroke="#e2e2e2" stroke-width="0.8" />
<line x1="537.1" y1="192" x2="537.1" y2="414.5" stroke="#e2e2e2" stroke-width="0.8" />
<line x1="598.5" y1="192" x2="598.5" y2="414.5" stroke="#e2e2e2" stroke-width="0.8" />
<line x1="660.4" y1="192" x2="660.4" y2="414.5" stroke="#e2e2e2" stroke-width="0.8" />
<rect x="160.6" y="175" width="62.20000000000002" height="16.4" fill="#6a6a6a" />
<rect x="160.6" y="190.9" width="62.20000000000002" height="1.2" fill="#5fae7b" />
<rect x="0" y="353.0199999999999" width="22.599999999999998" height="17.83" fill="#6a6a6a" />
<rect x="22.4" y="353.0199999999999" width="1.1" height="17.83" fill="#5fae7b" />
<line x1="23.0" y1="176" x2="23.0" y2="192" stroke="#3a3a3a" stroke-width="0.8" />
<line x1="85.19999999999999" y1="176" x2="85.19999999999999" y2="192" stroke="#3a3a3a" stroke-width="0.8" />
<line x1="160.2" y1="176" x2="160.2" y2="192" stroke="#3a3a3a" stroke-width="0.8" />
<line x1="222.4" y1="176" x2="222.4" y2="192" stroke="#3a3a3a" stroke-width="0.8" />
<line x1="284.20000000000005" y1="176" x2="284.20000000000005" y2="192" stroke="#3a3a3a" stroke-width="0.8" />
<line x1="537.1" y1="176" x2="537.1" y2="192" stroke="#3a3a3a" stroke-width="0.8" />
<line x1="598.5" y1="176" x2="598.5" y2="192" stroke="#3a3a3a" stroke-width="0.8" />
<line x1="660.4" y1="176" x2="660.4" y2="192" stroke="#3a3a3a" stroke-width="0.8" />
<line x1="0" y1="210.18" x2="22.4" y2="210.18" stroke="#3a3a3a" stroke-width="0.8" />
<line x1="0" y1="228.01" x2="22.4" y2="228.01" stroke="#3a3a3a" stroke-width="0.8" />
<line x1="0" y1="245.84" x2="22.4" y2="245.84" stroke="#3a3a3a" stroke-width="0.8" />
<line x1="0" y1="263.67" x2="22.4" y2="263.67" stroke="#3a3a3a" stroke-width="0.8" />
<line x1="0" y1="281.5" x2="22.4" y2="281.5" stroke="#3a3a3a" stroke-width="0.8" />
<line x1="0" y1="299.33" x2="22.4" y2="299.33" stroke="#3a3a3a" stroke-width="0.8" />
<line x1="0" y1="317.16" x2="22.4" y2="317.16" stroke="#3a3a3a" stroke-width="0.8" />
<line x1="0" y1="334.99" x2="22.4" y2="334.99" stroke="#3a3a3a" stroke-width="0.8" />
<line x1="0" y1="352.82" x2="22.4" y2="352.82" stroke="#3a3a3a" stroke-width="0.8" />
<line x1="0" y1="370.65" x2="22.4" y2="370.65" stroke="#3a3a3a" stroke-width="0.8" />
<line x1="0" y1="388.48" x2="22.4" y2="388.48" stroke="#3a3a3a" stroke-width="0.8" />
<line x1="0" y1="406.31" x2="22.4" y2="406.31" stroke="#3a3a3a" stroke-width="0.8" />
<line x1="0" y1="424.14" x2="22.4" y2="424.14" stroke="#3a3a3a" stroke-width="0.8" />
<path d="M22 176.8 L22 190.4 L8 190.4 Z" stroke="none" stroke-width="1" fill="#5e5e5e" />
<text x="54.5" y="188.2" font-size="11.2" fill="#f2f2f2" text-anchor="middle" stroke="none">A</text>
<text x="123.1" y="188.2" font-size="11.2" fill="#f2f2f2" text-anchor="middle" stroke="none">B</text>
<text x="191.7" y="188.2" font-size="11.2" fill="#f2f2f2" text-anchor="middle" stroke="none">C</text>
<text x="253.7" y="188.2" font-size="11.2" fill="#f2f2f2" text-anchor="middle" stroke="none">D</text>
<text x="411.1" y="188.2" font-size="11.2" fill="#f2f2f2" text-anchor="middle" stroke="none">E</text>
<text x="568.2" y="188.2" font-size="11.2" fill="#f2f2f2" text-anchor="middle" stroke="none">F</text>
<text x="629.8" y="188.2" font-size="11.2" fill="#f2f2f2" text-anchor="middle" stroke="none">G</text>
<text x="691.8" y="188.2" font-size="11.2" fill="#f2f2f2" text-anchor="middle" stroke="none">H</text>
<text x="11.2" y="206.0" font-size="11.6" fill="#f2f2f2" text-anchor="middle" stroke="none">1</text>
<text x="11.2" y="223.79" font-size="11.6" fill="#f2f2f2" text-anchor="middle" stroke="none">2</text>
<text x="11.2" y="241.58" font-size="11.6" fill="#f2f2f2" text-anchor="middle" stroke="none">3</text>
<text x="11.2" y="259.37" font-size="11.6" fill="#f2f2f2" text-anchor="middle" stroke="none">4</text>
<text x="11.2" y="277.16" font-size="11.6" fill="#f2f2f2" text-anchor="middle" stroke="none">5</text>
<text x="11.2" y="294.95" font-size="11.6" fill="#f2f2f2" text-anchor="middle" stroke="none">6</text>
<text x="11.2" y="312.74" font-size="11.6" fill="#f2f2f2" text-anchor="middle" stroke="none">7</text>
<text x="11.2" y="330.53" font-size="11.6" fill="#f2f2f2" text-anchor="middle" stroke="none">8</text>
<text x="11.2" y="348.32" font-size="11.6" fill="#f2f2f2" text-anchor="middle" stroke="none">9</text>
<text x="11.2" y="366.11" font-size="11.6" fill="#f2f2f2" text-anchor="middle" stroke="none">10</text>
<text x="11.2" y="383.9" font-size="11.6" fill="#f2f2f2" text-anchor="middle" stroke="none">11</text>
<text x="11.2" y="401.69" font-size="11.6" fill="#f2f2f2" text-anchor="middle" stroke="none">12</text>
<text x="11.2" y="419.48" font-size="11.6" fill="#f2f2f2" text-anchor="middle" stroke="none">13</text>
<rect x="85.19999999999999" y="210.18" width="137.20000000000002" height="17.83" fill="#e97132" />
<rect x="85.19999999999999" y="228.01" width="137.20000000000002" height="124.80999999999999" fill="#83e28e" />
<rect x="85.19999999999999" y="352.81999999999994" width="75.0" height="17.83" fill="#e49edd" />
<rect x="160.2" y="352.81999999999994" width="62.20000000000002" height="17.83" fill="#ffc000" />
<line x1="85.19999999999999" y1="228.01" x2="222.4" y2="228.01" stroke="#33663d" stroke-width="0.8" />
<line x1="85.19999999999999" y1="245.84" x2="222.4" y2="245.84" stroke="#33663d" stroke-width="0.8" />
<line x1="85.19999999999999" y1="263.67" x2="222.4" y2="263.67" stroke="#33663d" stroke-width="0.8" />
<line x1="85.19999999999999" y1="281.5" x2="222.4" y2="281.5" stroke="#33663d" stroke-width="0.8" />
<line x1="85.19999999999999" y1="299.33" x2="222.4" y2="299.33" stroke="#33663d" stroke-width="0.8" />
<line x1="85.19999999999999" y1="317.16" x2="222.4" y2="317.16" stroke="#33663d" stroke-width="0.8" />
<line x1="85.19999999999999" y1="334.99" x2="222.4" y2="334.99" stroke="#33663d" stroke-width="0.8" />
<line x1="85.19999999999999" y1="352.82" x2="222.4" y2="352.82" stroke="#33663d" stroke-width="0.8" />
<line x1="85.19999999999999" y1="228.01" x2="85.19999999999999" y2="352.81999999999994" stroke="#33663d" stroke-width="0.8" />
<line x1="160.2" y1="228.01" x2="160.2" y2="352.81999999999994" stroke="#33663d" stroke-width="0.8" />
<line x1="222.4" y1="228.01" x2="222.4" y2="352.81999999999994" stroke="#33663d" stroke-width="0.8" />
<rect x="160.5" y="353.11999999999995" width="61.600000000000016" height="17.229999999999997" fill="none" stroke="#217346" stroke-width="1.3" />
<rect x="161.4" y="354.0199999999999" width="59.80000000000002" height="15.429999999999998" fill="none" stroke="#ffffff" stroke-width="0.5" stroke-opacity="0.55"/>
<rect x="220.20000000000002" y="368.45" width="3.6" height="3.6" fill="#217346" stroke="#ffffff" stroke-width="0.7" />
<path d="M160.6 281.7 h4.8 l-4.8 4.4 Z" stroke="none" stroke-width="1" fill="#1a7a34" />
<path d="M161.2 353.81999999999994 h3 l-3 3 Z" stroke="none" stroke-width="1" fill="#1f7a3a" />
<text x="87.3" y="223.8" font-size="12.3" fill="#111111" textLength="28.2" lengthAdjust="spacingAndGlyphs" stroke="#111" stroke-width="0.25">Array</text>
<text x="163.2" y="223.8" font-size="12.3" fill="#111111" textLength="29.5" lengthAdjust="spacingAndGlyphs" stroke="#111" stroke-width="0.25">Sales</text>
<text x="87.3" y="241.58" font-size="12.3" fill="#111111" textLength="24.5" lengthAdjust="spacingAndGlyphs" stroke="#111" stroke-width="0.25">Shirt</text>
<text x="163.2" y="241.58" font-size="12.3" fill="#111111" textLength="20" lengthAdjust="spacingAndGlyphs" stroke="#111" stroke-width="0.25">$34</text>
<text x="87.3" y="259.36" font-size="12.3" fill="#111111" textLength="30" lengthAdjust="spacingAndGlyphs" stroke="#111" stroke-width="0.25">Jeans</text>
<text x="163.2" y="259.36" font-size="12.3" fill="#111111" textLength="20" lengthAdjust="spacingAndGlyphs" stroke="#111" stroke-width="0.25">$45</text>
<text x="87.3" y="277.14" font-size="12.3" fill="#111111" textLength="46" lengthAdjust="spacingAndGlyphs" stroke="#111" stroke-width="0.25">Trousers</text>
<text x="163.2" y="277.14" font-size="12.3" fill="#111111" textLength="20" lengthAdjust="spacingAndGlyphs" stroke="#111" stroke-width="0.25">$65</text>
<text x="87.3" y="294.92" font-size="12.3" fill="#111111" textLength="24" lengthAdjust="spacingAndGlyphs" stroke="#111" stroke-width="0.25">Skirt</text>
<text x="172" y="294.92" font-size="12.3" fill="#111111" textLength="40" lengthAdjust="spacingAndGlyphs" stroke="#111" stroke-width="0.25">#DIV/0!</text>
<text x="87.3" y="312.7" font-size="12.3" fill="#111111" textLength="64" lengthAdjust="spacingAndGlyphs" stroke="#111" stroke-width="0.25">SweatShirts</text>
<text x="163.2" y="312.7" font-size="12.3" fill="#111111" textLength="20" lengthAdjust="spacingAndGlyphs" stroke="#111" stroke-width="0.25">$67</text>
<text x="87.3" y="330.48" font-size="12.3" fill="#111111" textLength="19.5" lengthAdjust="spacingAndGlyphs" stroke="#111" stroke-width="0.25">Top</text>
<text x="163.2" y="330.48" font-size="12.3" fill="#111111" textLength="20" lengthAdjust="spacingAndGlyphs" stroke="#111" stroke-width="0.25">$34</text>
<text x="87.3" y="348.26" font-size="12.3" fill="#111111" textLength="50" lengthAdjust="spacingAndGlyphs" stroke="#111" stroke-width="0.25">Sweaters</text>
<text x="163.2" y="348.26" font-size="12.3" fill="#111111" textLength="20" lengthAdjust="spacingAndGlyphs" stroke="#111" stroke-width="0.25">$61</text>
<text x="87.3" y="366.04" font-size="12.3" fill="#111111" textLength="44.5" lengthAdjust="spacingAndGlyphs" stroke="#111" stroke-width="0.25">Formula</text>
<text x="169" y="366.04" font-size="12.3" fill="#111111" textLength="45.5" lengthAdjust="spacingAndGlyphs" stroke="#111" stroke-width="0.25">#VALUE!</text>
<rect x="136.9" y="353.1" width="14" height="13.8" fill="#333333" rx="0.8" />
<path d="M143.2 355.4 L148.5 364.3 L137.9 364.3 Z" stroke="#f5a742" stroke-width="0.6" fill="#f5a742" stroke-linejoin="round"/>
<text x="143.2" y="363.6" font-size="7.6" fill="#333333" font-weight="bold" text-anchor="middle" >!</text>
</g>
<rect x="705.3" y="176" width="12.4" height="240.2" fill="#1a1a1a" rx="6" />
<rect x="708.3" y="187" width="5.6" height="124" fill="#9a9a9a" rx="2.8" />
<path d="M707.8 183.2 L711.2 178.2 L714.6 183.2 Z" stroke="none" stroke-width="1" fill="#b5b5b5" />
<path d="M707.8 407.6 L714.6 407.6 L711.2 412.4 Z" stroke="none" stroke-width="1" fill="#b5b5b5" />
<path d="M124.2 414.5 Q126.7 414.5 126.7 417 L126.7 432.2 Q126.7 434.7 129.2 434.7 L167.5 434.7 Q170 434.7 170 432.2 L170 417 Q170 414.5 172.5 414.5 Z" stroke="none" stroke-width="1" fill="#ffffff" />
<rect x="120" y="413.8" width="56" height="0.9" fill="#ffffff" />
<path d="M19.8 421.9 L16.4 425.6 L19.8 429.3" stroke="#8c8c8c" stroke-width="1.0" fill="none" stroke-linecap="round" stroke-linejoin="round"/>
<path d="M40.2 421.9 L43.6 425.6 L40.2 429.3" stroke="#8c8c8c" stroke-width="1.0" fill="none" stroke-linecap="round" stroke-linejoin="round"/>
<text x="85" y="430.3" font-size="10.9" fill="#e4e4e4" textLength="29.7" lengthAdjust="spacingAndGlyphs" stroke="#e4e4e4" stroke-width="0.22" >Sheet1</text>
<text x="132.8" y="427.9" font-size="10.9" fill="#1c1c1c" textLength="31" lengthAdjust="spacingAndGlyphs" stroke="#1c1c1c" stroke-width="0.2">Sheet2</text>
<rect x="132.8" y="430.5" width="31.2" height="1.5" fill="#1e8e4e" />
<line x1="123.3" y1="419.7" x2="123.3" y2="432" stroke="#4a4a4a" stroke-width="0.8" />
<line x1="172.3" y1="419.7" x2="172.3" y2="432" stroke="#4a4a4a" stroke-width="0.8" />
<path d="M203.6 425.7 H211.8 M207.7 421.6 V429.8" stroke="#dcdcdc" stroke-width="1.0" fill="none" />
<circle cx="433.5" cy="423.4" r="0.85" fill="#d8d8d8"/>
<circle cx="433.5" cy="426.3" r="0.85" fill="#d8d8d8"/>
<circle cx="433.5" cy="429.2" r="0.85" fill="#d8d8d8"/>
<rect x="445" y="419.5" width="260.2" height="12.5" fill="#1a1a1a" rx="6.2" />
<rect x="457.5" y="423" width="176.5" height="6" fill="#9e9e9e" rx="3" />
<path d="M453.6 422.2 L453.6 429.4 L448.2 425.8 Z" stroke="none" stroke-width="1" fill="#b5b5b5" />
<path d="M696.3 422.2 L696.3 429.4 L701.4 425.8 Z" stroke="none" stroke-width="1" fill="#b5b5b5" />
<rect x="0" y="437.2" width="720" height="16.8" fill="#171717" />
<rect x="0" y="437.2" width="720" height="0.8" fill="#222222" />
<text x="7.3" y="448.6" font-size="8.2" fill="#cfcfcf" textLength="20.6" lengthAdjust="spacingAndGlyphs" stroke="#cfcfcf" stroke-width="0.22" >Ready</text>
<path d="M41.2 442.6 H51.6 V450.2 H41.2 Z M41.2 444.6 H51.6" stroke="#e0e0e0" stroke-width="0.9" fill="none" />
<circle cx="47.6" cy="447.6" r="2.3" fill="#171717" stroke="#e0e0e0" stroke-width="0.9"/>
<circle cx="47.6" cy="447.6" r="0.8" fill="#e0e0e0"/>
<circle cx="68" cy="442.3" r="1.4" fill="none" stroke="#e8e8e8" stroke-width="0.9"/>
<path d="M63.8 444.6 L66.5 445.4 H69.5 L72.2 444.6 M66.6 445.4 L66.2 448 L64.6 450.6 M69.4 445.4 L69.2 447 M68 448 L66.4 450.6" stroke="#e8e8e8" stroke-width="0.9" fill="none" stroke-linecap="round" stroke-linejoin="round"/>
<path d="M69.6 447.4 L73.6 451 M73.6 447.4 L69.6 451" stroke="#e8e8e8" stroke-width="0.9" fill="none" stroke-linecap="round"/>
<text x="76.7" y="449.2" font-size="8.1" fill="#f0f0f0" textLength="90" lengthAdjust="spacingAndGlyphs" font-weight="bold" >Accessibility: Investigate</text>
<rect x="496" y="437.4" width="27.8" height="16.6" fill="#353535" />
<path d="M505.2 440.8 H514.8 V450 H505.2 Z M508.4 440.8 V450 M511.6 440.8 V450 M505.2 443.9 H514.8 M505.2 447 H514.8" stroke="#f0f0f0" stroke-width="0.9" fill="none" />
<path d="M534 440.8 H544.2 V450 H534 Z M536.4 443 H541.8 V447.8 H536.4 Z" stroke="#e0e0e0" stroke-width="0.9" fill="none" />
<path d="M563.2 440.8 H573 V450 H563.2 Z M566.4 440.8 V446 H573 M569.6 440.8 V446" stroke="#e0e0e0" stroke-width="0.9" fill="none" />
<line x1="586" y1="445.5" x2="592.4" y2="445.5" stroke="#cfcfcf" stroke-width="0.9" />
<line x1="596" y1="445.5" x2="667.5" y2="445.5" stroke="#8f8f8f" stroke-width="0.9" />
<rect x="630.2" y="441.1" width="3.6" height="8.6" fill="#b8b8b8" rx="0.5" />
<path d="M671 445.5 H676.8 M673.9 442.6 V448.4" stroke="#cfcfcf" stroke-width="0.9" fill="none" />
<text x="686.3" y="449" font-size="8.3" fill="#e8e8e8" textLength="18.8" lengthAdjust="spacingAndGlyphs" stroke="#e8e8e8" stroke-width="0.22" >100%</text>
<rect x="717.2" y="0" width="1.3" height="454" fill="#020202" />
<rect x="0" y="451.9" width="720" height="0.9" fill="#040404" />
<rect x="718.45" y="0" width="1.6" height="454" fill="#b4b4b4" />
<rect x="718.45" y="0" width="1.6" height="3" fill="#d8d8d8" />
<rect x="0" y="452.75" width="718.45" height="1.3" fill="#4c4c4c" />
<path d="M718.45 448.9 A3.8 3.8 0 0 1 714.6 452.75 L718.45 452.75 Z" stroke="none" stroke-width="1" fill="#6e6e6e" />
<path d="M717.3 448.9 A2.8 2.8 0 0 1 714.6 451.9 L717.3 451.9 Z" stroke="none" stroke-width="1" fill="#040404" />
<path d="M0 450.6 A2.2 2.2 0 0 0 2.2 452.75 L0 452.75 Z" stroke="none" stroke-width="1" fill="#4c4c4c" />
<path d="M718.45 2.6 A2.6 2.6 0 0 0 715.8 0 L718.45 0 Z" stroke="none" stroke-width="1" fill="#c8c8c8" />
</svg>
</body>
</html>
